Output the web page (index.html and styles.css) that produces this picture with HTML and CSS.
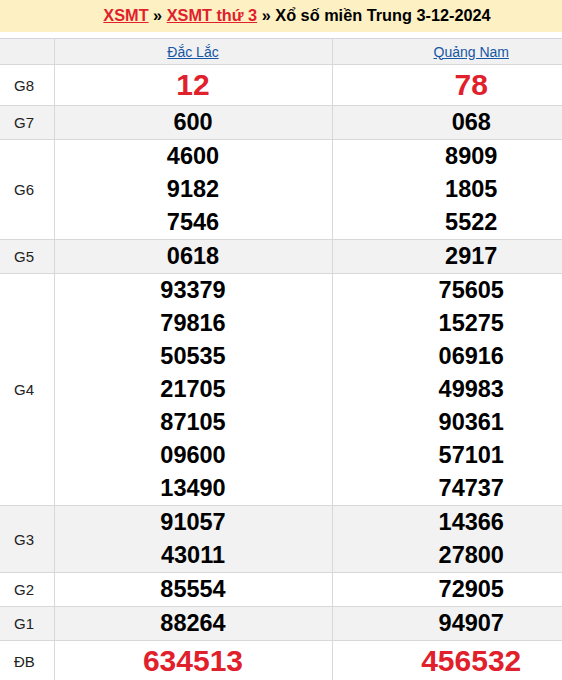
FILE: index.html
```html
<!DOCTYPE html>
<html lang="vi">
<head>
<meta charset="utf-8">
<title>XSMT 3-12-2024</title>
<link rel="stylesheet" href="styles.css">
</head>
<body>
<div class="viewport">
<div class="page">
  <h2 class="title"><a href="#">XSMT</a> » <a href="#">XSMT thứ 3</a> » Xổ số miền Trung 3-12-2024</h2>
  <table class="kq">
    <colgroup><col class="c-lbl"><col class="c-prov"><col class="c-prov"></colgroup>
    <thead>
      <tr><th></th><th><a href="#">Đắc Lắc</a></th><th><a href="#">Quảng Nam</a></th></tr>
    </thead>
    <tbody>
      <tr class="g8"><td class="lbl">G8</td><td><div class="n big">12</div></td><td><div class="n big">78</div></td></tr>
      <tr class="alt"><td class="lbl">G7</td><td><div class="n">600</div></td><td><div class="n">068</div></td></tr>
      <tr><td class="lbl">G6</td><td><div class="n">4600</div><div class="n">9182</div><div class="n">7546</div></td><td><div class="n">8909</div><div class="n">1805</div><div class="n">5522</div></td></tr>
      <tr class="alt"><td class="lbl">G5</td><td><div class="n">0618</div></td><td><div class="n">2917</div></td></tr>
      <tr><td class="lbl">G4</td><td><div class="n">93379</div><div class="n">79816</div><div class="n">50535</div><div class="n">21705</div><div class="n">87105</div><div class="n">09600</div><div class="n">13490</div></td><td><div class="n">75605</div><div class="n">15275</div><div class="n">06916</div><div class="n">49983</div><div class="n">90361</div><div class="n">57101</div><div class="n">74737</div></td></tr>
      <tr class="alt"><td class="lbl">G3</td><td><div class="n">91057</div><div class="n">43011</div></td><td><div class="n">14366</div><div class="n">27800</div></td></tr>
      <tr><td class="lbl">G2</td><td><div class="n">85554</div></td><td><div class="n">72905</div></td></tr>
      <tr class="alt"><td class="lbl">G1</td><td><div class="n">88264</div></td><td><div class="n">94907</div></td></tr>
      <tr class="g8"><td class="lbl">ĐB</td><td><div class="n big">634513</div></td><td><div class="n big">456532</div></td></tr>
    </tbody>
  </table>
</div>
</div>
</body>
</html>
```
FILE: styles.css
```css
html, body {
  margin: 0;
  padding: 0;
  background: #fff;
}
body {
  font-family: "Liberation Sans", Arial, sans-serif;
  color: #000;
}
.viewport {
  width: 100%;
  overflow: hidden;
}
.page {
  width: 610px;
}
.title {
  margin: 0 0 6px 0;
  height: 32px;
  line-height: 30px;
  background: #fdf1c4;
  font-size: 16.3px;
  font-weight: bold;
  text-align: center;
  color: #000;
  padding-right: 16px;
}
.title a {
  color: #e0212c;
  text-decoration: underline;
}
.kq {
  width: 610px;
  border-collapse: collapse;
  table-layout: fixed;
}
.c-lbl { width: 54px; }
.c-prov { width: 278px; }
.kq th {
  height: 25px;
  background: #f1f1f1;
  border-top: 1px solid #d3d6de;
  border-bottom: 1px solid #d8d8d8;
  border-left: 1px solid #d8d8d8;
  font-weight: normal;
  font-size: 14px;
  padding: 0;
  text-align: center;
  vertical-align: middle;
}
.kq th:first-child { border-left: none; }
.kq th a {
  color: #1656a5;
  text-decoration: underline;
}
.kq td {
  border-bottom: 1px solid #d8d8d8;
  border-left: 1px solid #d8d8d8;
  padding: 0;
  text-align: center;
  vertical-align: middle;
}
.kq td.lbl {
  border-left: none;
  text-align: left;
  padding-left: 14px;
  font-size: 15px;
  color: #222;
}
.kq tr.alt td { background: #f2f2f2; }
.n {
  height: 33px;
  line-height: 33px;
  font-size: 23.5px;
  font-weight: bold;
  color: #000;
}
.n.big {
  height: 40px;
  line-height: 40px;
  font-size: 30px;
  color: #e0212c;
}
```
